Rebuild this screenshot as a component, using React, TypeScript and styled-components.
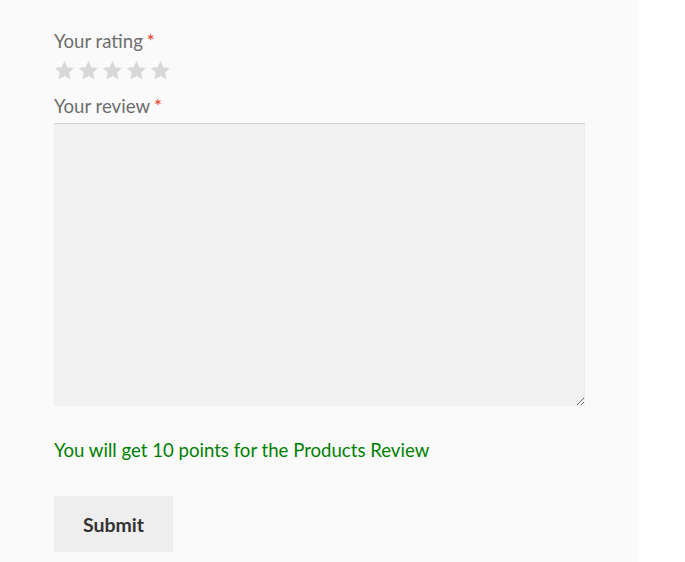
import React from 'react';
import styled, { createGlobalStyle } from 'styled-components';

const GlobalStyle = createGlobalStyle`
  html, body {
    margin: 0;
    padding: 0;
    background: #ffffff;
  }
  body {
    font-family: Lato, "Open Sans", sans-serif;
  }
`;

const Panel = styled.div`
  width: 638px;
  height: 562px;
  box-sizing: border-box;
  background: #fafafa;
  padding: 29px 0 0 54px;
`;

const Form = styled.form`
  display: flex;
  flex-direction: column;
  align-items: flex-start;
`;

const Label = styled.label`
  font-size: 18.6px;
  line-height: 25px;
  color: #6d6d6d;
`;

const Required = styled.span`
  color: #e2401c;
  margin-left: 4px;
`;

const Stars = styled.div`
  display: flex;
  gap: 3px;
  margin: 6px 0 13px;
`;

const Field = styled.textarea`
  width: 531px;
  height: 283px;
  box-sizing: border-box;
  margin: 4px 0 0;
  padding: 10px;
  border: 0;
  outline: none;
  background: #f2f2f2;
  box-shadow: inset 0 1px 1px rgba(0, 0, 0, 0.125);
  font: inherit;
  resize: both;
`;

const Notice = styled.p`
  margin: 32px 0 0;
  font-size: 18.6px;
  line-height: 25px;
  color: #008000;
`;

const SubmitButton = styled.button`
  width: 119px;
  height: 56px;
  margin-top: 33px;
  border: 0;
  background: #eeeeee;
  color: #333333;
  font-family: inherit;
  font-size: 19.5px;
  font-weight: 700;
  cursor: pointer;
`;

function Star() {
  return (
    <svg width="21" height="21" viewBox="0 0 24 24" aria-hidden="true">
      <path
        fill="#d8d8d8"
        d="M12 1.2l3.3 7 7.6.9-5.6 5.3 1.5 7.6L12 18.2 5.2 22l1.5-7.6L1.1 9.1l7.6-.9z"
      />
    </svg>
  );
}

export default function App() {
  return (
    <>
      <GlobalStyle />
      <Panel>
        <Form onSubmit={(e) => e.preventDefault()}>
          <Label>
            Your rating<Required>*</Required>
          </Label>
          <Stars>
            {[1, 2, 3, 4, 5].map((n) => (
              <Star key={n} />
            ))}
          </Stars>
          <Label htmlFor="review">
            Your review<Required>*</Required>
          </Label>
          <Field id="review" />
          <Notice>You will get 10 points for the Products Review</Notice>
          <SubmitButton type="submit">Submit</SubmitButton>
        </Form>
      </Panel>
    </>
  );
}
